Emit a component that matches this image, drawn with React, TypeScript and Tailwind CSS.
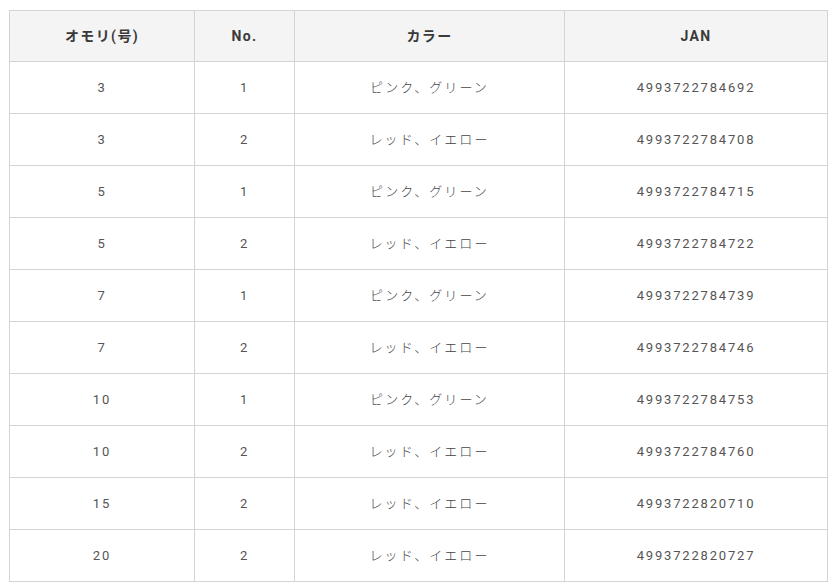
const rows = [
  ["3", "1", "ピンク、グリーン", "4993722784692"],
  ["3", "2", "レッド、イエロー", "4993722784708"],
  ["5", "1", "ピンク、グリーン", "4993722784715"],
  ["5", "2", "レッド、イエロー", "4993722784722"],
  ["7", "1", "ピンク、グリーン", "4993722784739"],
  ["7", "2", "レッド、イエロー", "4993722784746"],
  ["10", "1", "ピンク、グリーン", "4993722784753"],
  ["10", "2", "レッド、イエロー", "4993722784760"],
  ["15", "2", "レッド、イエロー", "4993722820710"],
  ["20", "2", "レッド、イエロー", "4993722820727"],
];

const headers = ["オモリ(号)", "No.", "カラー", "JAN"];
const widths = ["w-[185px]", "w-[100px]", "w-[270px]", "w-[263px]"];

export default function App() {
  return (
    <div className="min-h-screen bg-white pt-[10px] pl-[9px] font-['Roboto','Noto_Sans_CJK_JP',sans-serif]">
      <table className="w-[819px] table-fixed border-collapse text-center">
        <thead>
          <tr className="h-[51px] bg-[#f4f4f4]">
            {headers.map((h, i) => (
              <th
                key={h}
                className={`${widths[i]} border border-[#d4d4d4] border-b-0 text-[14px] font-bold tracking-[0.1em] text-[#3a3a3a]`}
              >
                {h}
              </th>
            ))}
          </tr>
        </thead>
        <tbody>
          {rows.map((r, ri) => (
            <tr key={ri} className="h-[52px]">
              {r.map((c, ci) => (
                <td
                  key={ci}
                  className={
                    ci === 2
                      ? "border border-[#d4d4d4] text-[13px] font-light tracking-[0.16em] text-[#444]"
                      : "border border-[#d4d4d4] text-[13px] tracking-[0.14em] text-[#555]"
                  }
                >
                  {c}
                </td>
              ))}
            </tr>
          ))}
        </tbody>
      </table>
    </div>
  );
}
